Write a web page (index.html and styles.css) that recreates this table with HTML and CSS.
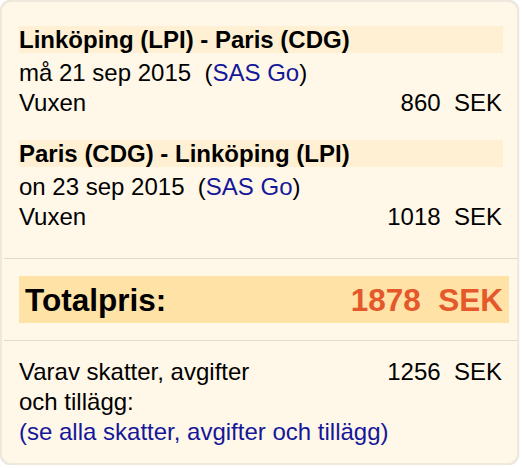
FILE: index.html
```html
<!DOCTYPE html>
<html lang="sv">
<head>
<meta charset="utf-8">
<title>Prisöversikt</title>
<link rel="stylesheet" href="styles.css">
</head>
<body>
<div class="card">
  <div class="segment">
    <div class="route">Linköping (LPI) - Paris (CDG)</div>
    <div class="line">må 21 sep 2015&nbsp; (<a class="link" href="#">SAS Go</a>)</div>
    <div class="line row"><span>Vuxen</span><span>860&nbsp; SEK</span></div>
  </div>
  <div class="segment second">
    <div class="route">Paris (CDG) - Linköping (LPI)</div>
    <div class="line">on 23 sep 2015&nbsp; (<a class="link" href="#">SAS Go</a>)</div>
    <div class="line row"><span>Vuxen</span><span>1018&nbsp; SEK</span></div>
  </div>
  <hr class="sep first-sep">
  <div class="total">
    <span>Totalpris:</span>
    <span class="total-price">1878&nbsp; SEK</span>
  </div>
  <hr class="sep second-sep">
  <div class="taxes">
    <div class="line row tax-row"><span class="tax-label">Varav skatter, avgifter och tillägg:</span><span>1256&nbsp; SEK</span></div>
    <div class="line"><a class="link" href="#">(se alla skatter, avgifter och tillägg)</a></div>
  </div>
</div>
</body>
</html>
```

FILE: styles.css
```css
html, body {
  margin: 0;
  padding: 0;
  background: #ffffff;
}

body {
  font-family: "Liberation Sans", Arial, Helvetica, sans-serif;
  color: #000000;
}

.card {
  box-sizing: border-box;
  width: 519px;
  height: 465px;
  background: #fff8e8;
  border: 2px solid #efe9dd;
  border-radius: 11px;
  padding: 24px 14px 0 17px;
  box-shadow: 0 0 1px rgba(120, 110, 90, 0.35);
}

.segment {
  display: flex;
  flex-direction: column;
}

.segment.second {
  margin-top: 22px;
}

.route {
  background: #fff0d3;
  font-weight: bold;
  font-size: 24px;
  line-height: 27px;
  height: 27px;
  margin-bottom: 5px;
}

.line {
  font-size: 24px;
  line-height: 30px;
}

.row {
  display: flex;
  justify-content: space-between;
  padding-right: 1px;
}

.link {
  color: #15179a;
  text-decoration: none;
}

.sep {
  border: 0;
  height: 1px;
  background: #e2dacb;
  margin: 0 -15px;
}

.first-sep {
  margin-top: 26px;
}

.total {
  display: flex;
  justify-content: space-between;
  align-items: center;
  height: 47px;
  margin: 17px -6px 17px 0;
  padding: 1px 6px 0 6px;
  box-sizing: border-box;
  background: #ffe2a5;
  font-weight: bold;
  font-size: 31.5px;
}

.total-price {
  color: #e5582b;
}

.taxes {
  margin-top: 16px;
}

.tax-label {
  width: 260px;
}
```
